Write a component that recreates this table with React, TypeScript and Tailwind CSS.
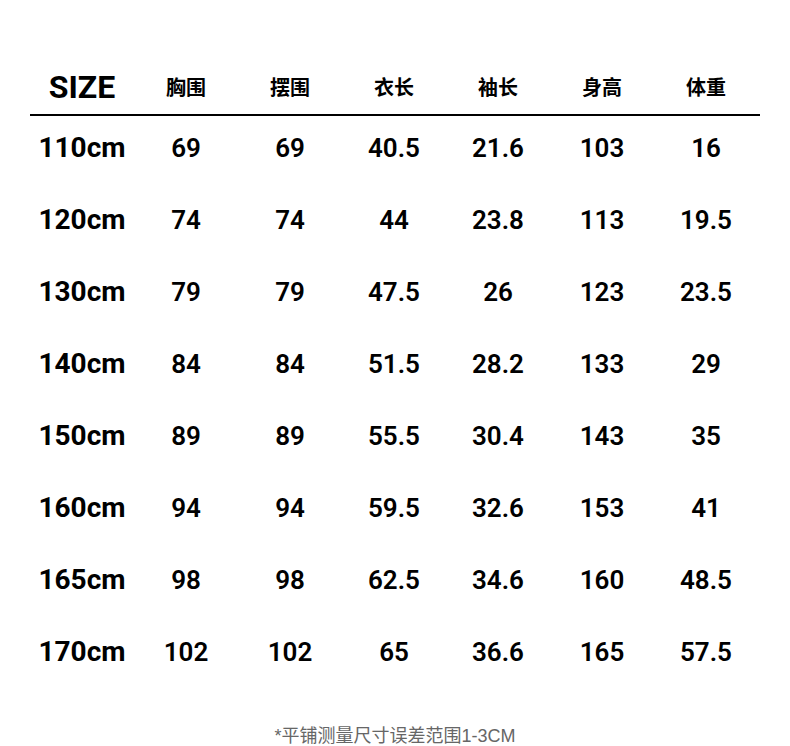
const headers = ['胸围', '摆围', '衣长', '袖长', '身高', '体重'];

const rows: [string, string[]][] = [
  ['110cm', ['69', '69', '40.5', '21.6', '103', '16']],
  ['120cm', ['74', '74', '44', '23.8', '113', '19.5']],
  ['130cm', ['79', '79', '47.5', '26', '123', '23.5']],
  ['140cm', ['84', '84', '51.5', '28.2', '133', '29']],
  ['150cm', ['89', '89', '55.5', '30.4', '143', '35']],
  ['160cm', ['94', '94', '59.5', '32.6', '153', '41']],
  ['165cm', ['98', '98', '62.5', '34.6', '160', '48.5']],
  ['170cm', ['102', '102', '65', '36.6', '165', '57.5']],
];

export default function App() {
  return (
    <div className="w-[790px] h-[746px] bg-white text-black overflow-hidden">
      <div className="pt-[60px] px-[30px]">
        {/* header */}
        <div className="grid grid-cols-[repeat(7,104px)] h-[56px] items-center border-b-2 border-black w-[730px]">
          <div className="text-center text-[32px] font-bold font-['Liberation_Sans_Narrow',Roboto,sans-serif]">
            SIZE
          </div>
          {headers.map((h) => (
            <div key={h} className="text-center text-[20px] font-bold font-['Noto_Sans_CJK_SC',sans-serif]">
              {h}
            </div>
          ))}
        </div>

        {/* body */}
        {rows.map(([size, vals]) => (
          <div key={size} className="grid grid-cols-[repeat(7,104px)] h-[72px] pt-[2px] pb-[10px] items-center">
            <div className="text-center text-[28px] font-bold leading-none font-['Liberation_Sans_Narrow',Roboto,sans-serif]">
              {size}
            </div>
            {vals.map((v, i) => (
              <div
                key={i}
                className="text-center text-[26px] font-semibold leading-none font-['Liberation_Sans_Narrow',Roboto,sans-serif]"
              >
                {v}
              </div>
            ))}
          </div>
        ))}
      </div>

      <div className="mt-[36px] text-center text-[18px] leading-[16px] text-[#666666] font-['Liberation_Sans','Noto_Sans_CJK_SC',sans-serif]">
        *平铺测量尺寸误差范围1-3CM
      </div>
    </div>
  );
}
